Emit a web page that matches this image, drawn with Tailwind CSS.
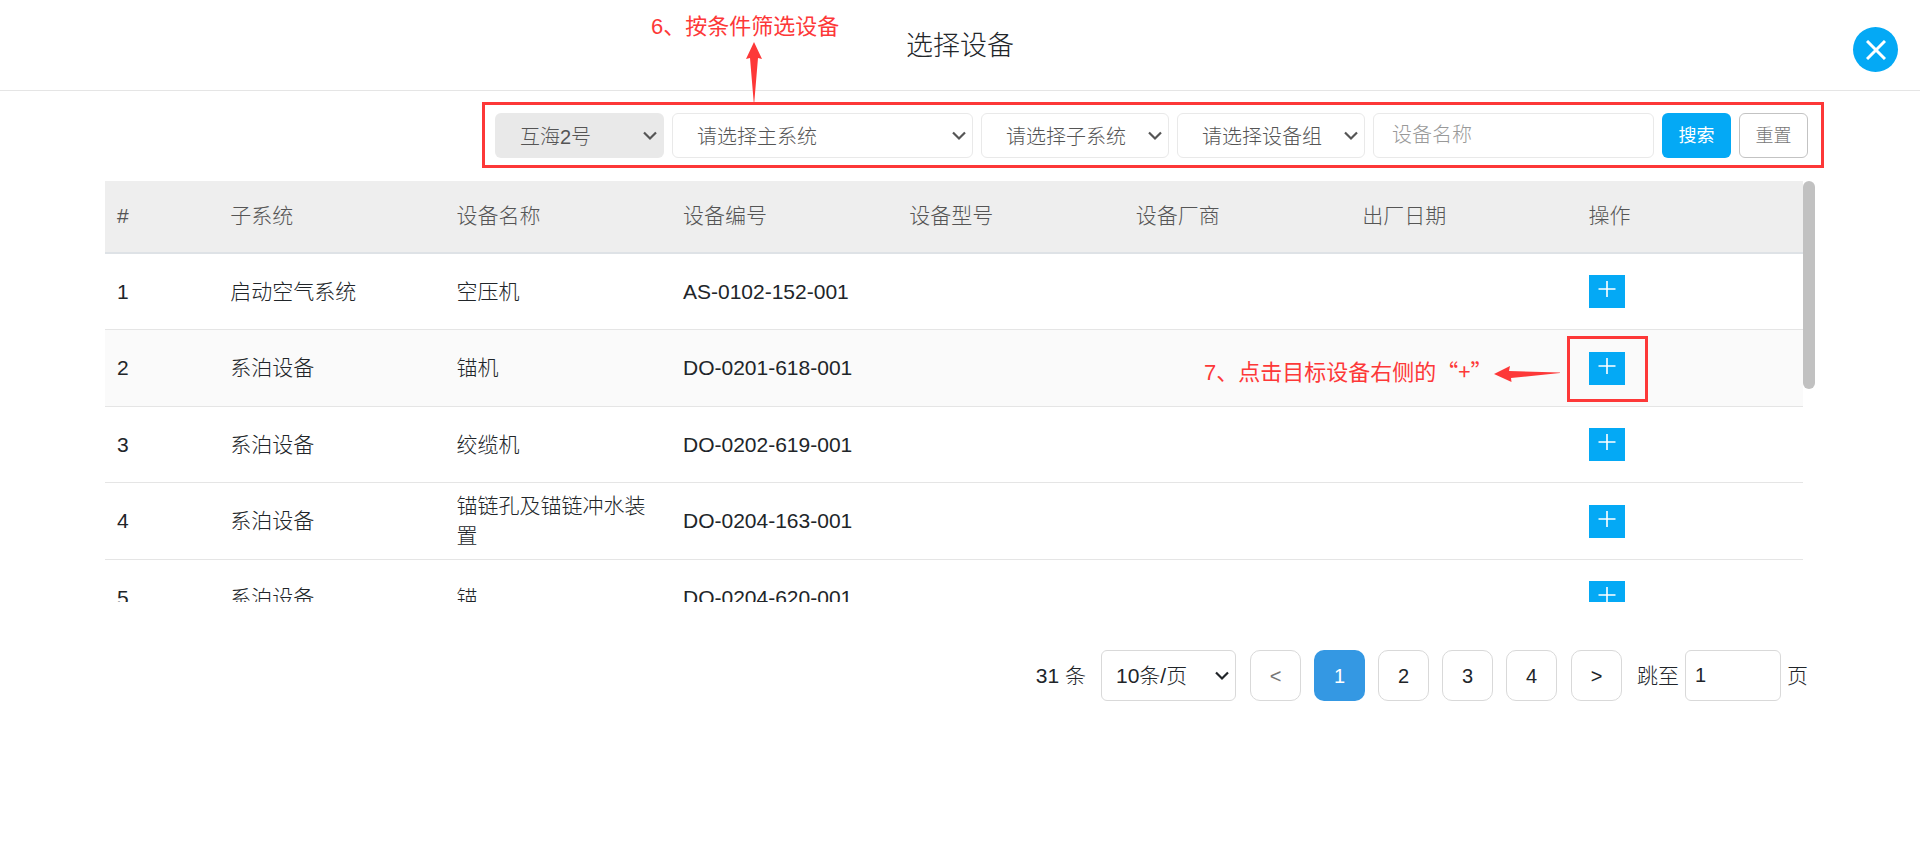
<!DOCTYPE html>
<html lang="zh-CN">
<head>
<meta charset="utf-8">
<meta name="viewport" content="width=device-width, initial-scale=1">
<title>选择设备</title>
<script src="https://cdn.jsdelivr.net/npm/@tailwindcss/browser@4"></script>
</head>
<body class="min-h-screen bg-white font-['Liberation_Sans','Noto_Sans_CJK_SC',sans-serif] text-xl font-light text-[#212529]">

<svg class="hidden" aria-hidden="true">
  <symbol id="chevron" viewBox="0 0 14 10"><path d="M1 1.5 7 7.5 13 1.5" fill="none" stroke="currentColor" stroke-width="2.2"/></symbol>
  <symbol id="plus" viewBox="0 0 18 18"><path d="M9 1v16M0.500 9h17" fill="none" stroke="currentColor" stroke-width="1.6"/></symbol>
</svg>

<header class="relative flex h-[91px] items-center justify-center border-b border-[#e5e5e5] pt-[2px]">
  <h1 class="text-[27px] leading-9">选择设备</h1>
  <button type="button" aria-label="关闭" class="absolute top-[27px] right-[22px] flex size-[45px] items-center justify-center rounded-full bg-[#04a9f5] text-white">
    <svg class="size-5" viewBox="0 0 20 20"><path d="M1 1 19 19M19 1 1 19" fill="none" stroke="currentColor" stroke-width="3"/></svg>
  </button>
</header>

<main class="px-[105px] pt-[22px]">
  <div class="flex justify-end pr-[7px]">
    <form class="relative flex gap-2 text-[#555]" onsubmit="return false">
      <div class="relative w-[169px]">
        <select aria-label="船舶" disabled class="h-[45px] w-full appearance-none rounded-md bg-[#e9e9e9] pt-[2px] pl-[25px] opacity-100"><option>互海2号</option></select>
        <svg class="pointer-events-none absolute top-[18px] right-[7px] h-[10px] w-[14px]"><use href="#chevron"/></svg>
      </div>
      <div class="relative w-[301px]">
        <select aria-label="主系统" class="h-[45px] w-full appearance-none rounded-md border border-[#e9e9e9] bg-white pt-[2px] pl-6"><option>请选择主系统</option></select>
        <svg class="pointer-events-none absolute top-[18px] right-[7px] h-[10px] w-[14px]"><use href="#chevron"/></svg>
      </div>
      <div class="relative w-[188px]">
        <select aria-label="子系统" class="h-[45px] w-full appearance-none rounded-md border border-[#e9e9e9] bg-white pt-[2px] pl-6"><option>请选择子系统</option></select>
        <svg class="pointer-events-none absolute top-[18px] right-[7px] h-[10px] w-[14px]"><use href="#chevron"/></svg>
      </div>
      <div class="relative w-[188px]">
        <select aria-label="设备组" class="h-[45px] w-full appearance-none rounded-md border border-[#e9e9e9] bg-white pt-[2px] pl-6"><option>请选择设备组</option></select>
        <svg class="pointer-events-none absolute top-[18px] right-[7px] h-[10px] w-[14px]"><use href="#chevron"/></svg>
      </div>
      <input type="text" aria-label="设备名称" placeholder="设备名称" class="h-[45px] w-[281px] rounded-md border border-[#e9e9e9] px-[18px] placeholder:text-[#999]">
      <button type="submit" class="h-[45px] w-[69px] rounded-md bg-[#04a9f5] text-lg font-normal text-white">搜索</button>
      <button type="reset" class="h-[45px] w-[69px] rounded-md border border-[#c3c3c3] text-lg text-[#777]">重置</button>

      <!-- step 6 callout -->
      <div class="pointer-events-none absolute -top-[11px] -right-4 -bottom-[10px] -left-[13px] border-3 border-[#fd3838]"></div>
      <div class="pointer-events-none absolute -top-[102px] left-[156px] w-max text-[22px] leading-8 font-normal text-[#fd3838]">6、按条件筛选设备</div>
      <svg class="pointer-events-none absolute -top-[71px] left-[251px] h-[60px] w-4 text-[#fd3838]" viewBox="0 0 16 60"><path d="M8 0 16 17 12 16 8.300 60H7.700L4 16 0 17Z" fill="currentColor"/></svg>
    </form>
  </div>

  <div class="mt-[23px] flex h-[421px] items-start overflow-hidden">
    <table class="w-full table-fixed border-separate border-spacing-0 text-left text-[21px] leading-[30px]">
      <colgroup><col class="w-1/15"><col class="w-2/15"><col class="w-2/15"><col class="w-2/15"><col class="w-2/15"><col class="w-2/15"><col class="w-2/15"><col class="w-2/15"></colgroup>
      <thead class="bg-[#eee] text-[#555] [&_th]:h-[73px] [&_th]:border-b-2 [&_th]:border-[#dee2e6] [&_th]:px-3 [&_th]:pb-[2px] [&_th]:font-light">
        <tr><th>#</th><th>子系统</th><th>设备名称</th><th>设备编号</th><th>设备型号</th><th>设备厂商</th><th>出厂日期</th><th>操作</th></tr>
      </thead>
      <tbody class="[&_td]:border-b [&_td]:border-[#e5e5e5] [&_td]:px-3 [&_td]:py-0">
        <tr class="h-[76px]"><td>1</td><td>启动空气系统</td><td>空压机</td><td>AS-0102-152-001</td><td></td><td></td><td></td>
          <td><button type="button" aria-label="添加" class="flex h-[33px] w-9 justify-center bg-[#04a9f5] pt-[5px] text-white"><svg class="size-[18px]"><use href="#plus"/></svg></button></td></tr>
        <tr class="h-[77px] bg-[#fafafa]"><td>2</td><td>系泊设备</td><td>锚机</td><td>DO-0201-618-001</td><td></td><td></td><td></td>
          <td><div class="relative w-9">
            <button type="button" aria-label="添加" class="flex h-[33px] w-9 justify-center bg-[#04a9f5] pt-[5px] text-white"><svg class="size-[18px]"><use href="#plus"/></svg></button>
            <!-- step 7 callout -->
            <div class="pointer-events-none absolute -top-4 -left-[22px] h-[66px] w-[81px] border-3 border-[#fd3838]"></div>
            <svg class="pointer-events-none absolute top-[14px] right-[65px] h-4 w-[66px] text-[#fd3838]" viewBox="0 0 66 16"><path d="M0 8 16 0 15 5 66 6.500V7L17 12 17.500 16Z" fill="currentColor"/></svg>
            <div class="pointer-events-none absolute top-[2px] right-[132px] w-max text-[22px] leading-8 font-normal text-[#fd3838]">7、点击目标设备右侧的<span class="font-['Noto_Sans_CJK_SC',sans-serif]">“+”</span></div>
          </div></td></tr>
        <tr class="h-[76px]"><td>3</td><td>系泊设备</td><td>绞缆机</td><td>DO-0202-619-001</td><td></td><td></td><td></td>
          <td><button type="button" aria-label="添加" class="flex h-[33px] w-9 justify-center bg-[#04a9f5] pt-[5px] text-white"><svg class="size-[18px]"><use href="#plus"/></svg></button></td></tr>
        <tr class="h-[77px]"><td>4</td><td>系泊设备</td><td>锚链孔及锚链冲水装置</td><td>DO-0204-163-001</td><td></td><td></td><td></td>
          <td><button type="button" aria-label="添加" class="flex h-[33px] w-9 justify-center bg-[#04a9f5] pt-[5px] text-white"><svg class="size-[18px]"><use href="#plus"/></svg></button></td></tr>
        <tr class="h-[76px]"><td>5</td><td>系泊设备</td><td>锚</td><td>DO-0204-620-001</td><td></td><td></td><td></td>
          <td><button type="button" aria-label="添加" class="flex h-[33px] w-9 justify-center bg-[#04a9f5] pt-[5px] text-white"><svg class="size-[18px]"><use href="#plus"/></svg></button></td></tr>
      </tbody>
    </table>
    <div class="h-[208px] w-3 shrink-0 rounded-full bg-[#c1c1c1]"></div>
  </div>

  <nav aria-label="分页" class="mt-12 flex items-center justify-end gap-[13px] pr-[7px]">
    <span class="mr-[2px] text-[21px]">31 条</span>
    <div class="relative mr-px w-[135px]">
      <select aria-label="每页条数" class="h-[51px] w-full appearance-none rounded-md border border-[#d9d9d9] bg-white pl-[14px] text-[21px]"><option>10条/页</option></select>
      <svg class="pointer-events-none absolute top-[21px] right-[7px] h-[10px] w-[14px]"><use href="#chevron"/></svg>
    </div>
    <div class="mr-px flex gap-[13px]">
      <button type="button" class="size-[51px] rounded-[10px] border border-[#d9d9d9] text-[#777]">&lt;</button>
      <button type="button" aria-current="page" class="size-[51px] rounded-[10px] bg-[#3498e3] text-white">1</button>
      <button type="button" class="size-[51px] rounded-[10px] border border-[#d9d9d9]">2</button>
      <button type="button" class="size-[51px] rounded-[10px] border border-[#d9d9d9]">3</button>
      <button type="button" class="size-[51px] rounded-[10px] border border-[#d9d9d9]">4</button>
    </div>
    <button type="button" class="size-[51px] rounded-[10px] border border-[#d9d9d9]">&gt;</button>
    <label class="flex items-center gap-[6px] pl-[2px] text-[21px]">跳至
      <input type="text" value="1" class="h-[51px] w-24 rounded-md border border-[#d9d9d9] px-[9px] text-xl">
      页</label>
  </nav>
</main>
</body>
</html>
